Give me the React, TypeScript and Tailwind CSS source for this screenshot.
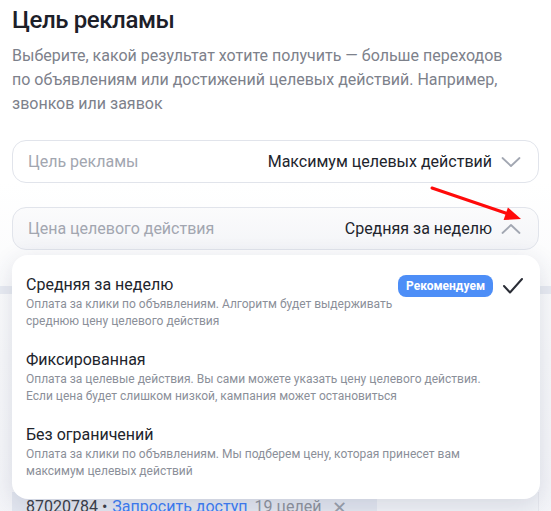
import React from "react";

const font = { fontFamily: "Roboto, 'Noto Sans', Arial, sans-serif" };

function ChevronDown() {
  return (
    <svg width="20" height="12" viewBox="0 0 20 12" fill="none">
      <path d="M1.5 2 L10 10 L18.5 2" stroke="#a2a7b2" strokeWidth="1.8" strokeLinecap="round" strokeLinejoin="round" />
    </svg>
  );
}
function ChevronUp() {
  return (
    <svg width="20" height="12" viewBox="0 0 20 12" fill="none">
      <path d="M1.5 10 L10 2 L18.5 10" stroke="#a2a7b2" strokeWidth="1.8" strokeLinecap="round" strokeLinejoin="round" />
    </svg>
  );
}
function Check() {
  return (
    <svg width="22" height="18" viewBox="0 0 22 18" fill="none">
      <path d="M2 9 L8 15.5 L20 2" stroke="#2a2d36" strokeWidth="2" strokeLinecap="round" strokeLinejoin="round" />
    </svg>
  );
}

const items = [
  {
    title: "Средняя за неделю",
    desc: ["Оплата за клики по объявлениям. Алгоритм будет выдерживать", "среднюю цену целевого действия"],
    selected: true,
  },
  {
    title: "Фиксированная",
    desc: ["Оплата за целевые действия. Вы сами можете указать цену целевого действия.", "Если цена будет слишком низкой, кампания может остановиться"],
  },
  {
    title: "Без ограничений",
    desc: ["Оплата за клики по объявлениям. Мы подберем цену, которая принесет вам", "максимум целевых действий"],
  },
];

export default function App() {
  return (
    <div className="relative w-[551px] h-[511px] overflow-hidden bg-white" style={font}>
      <div className="px-3">
        <h1 className="pt-[3px] text-[24px] leading-[34px] font-medium text-[#1d2029] tracking-[-0.4px]">Цель рекламы</h1>
        <p className="mt-[7px] text-[16px] leading-[24px] text-[#7d818b]">
          Выберите, какой результат хотите получить — больше переходов
          <br />
          по объявлениям или достижений целевых действий. Например,
          <br />
          звонков или заявок
        </p>
        <div className="mt-[24px] h-[43px] rounded-[14px] border border-[#e1e4eb] bg-white flex items-center pl-[15px] pr-[17px]">
          <span className="text-[16px] text-[#a2a6b0]">Цель рекламы</span>
          <span className="ml-auto text-[16px] text-[#21242c]">Максимум целевых действий</span>
          <span className="ml-[9px] flex"><ChevronDown /></span>
        </div>
      </div>
      <div className="bg-gradient-to-b from-white via-[#f7f8fa] to-[#f3f4f8]">
        <div className="px-3 pt-[24px]">
          <div className="h-[43px] rounded-[14px] border border-[#e1e4eb] bg-gradient-to-b from-[#fbfbfc] to-[#f4f5f8] flex items-center pl-[15px] pr-[17px]">
            <span className="text-[16px] text-[#a2a6b0]">Цена целевого действия</span>
            <span className="ml-auto text-[16px] text-[#21242c]">Средняя за неделю</span>
            <span className="ml-[9px] flex"><ChevronUp /></span>
          </div>
        </div>
        <div className="mt-[36px] h-[8px] bg-[#e8ebf2]" />
        <div className="h-[198px]" />
        <div className="mx-3 border-r border-[#e6e8ee] h-[40px] bg-[#f1f3f7]">
          <div className="inline-flex items-center h-[30px] bg-[#e3e7f0] pl-[14px] pr-[30px] text-[16px] gap-[5px]">
            <span className="text-[#3b3e47]">87020784 •</span>
            <span className="text-[#3d7ef6]">Запросить доступ</span>
            <span className="text-[#8f939d] ml-[2px]">19 целей</span>
            <span className="text-[#9aa0ab] ml-[6px] text-[18px]">✕</span>
          </div>
        </div>
      </div>

      {/* Dropdown menu */}
      <div className="absolute left-[12px] top-[255px] w-[528px] h-[244px] rounded-[16px] bg-white shadow-[0_6px_24px_rgba(40,50,90,0.14)] pt-[19px] pl-[14px] pr-[16px] flex flex-col gap-[19px]">
        {items.map((it) => (
          <div key={it.title} className="relative">
            <div className="text-[16px] leading-[22px] text-[#21242c]">{it.title}</div>
            <div className="text-[12px] leading-[17px] text-[#8b8f99]">
              {it.desc[0]}
              <br />
              {it.desc[1]}
            </div>
            {it.selected && (
              <div className="absolute right-0 top-[1px] flex items-center gap-[9px]">
                <span className="h-[22px] px-[8px] rounded-[8px] bg-[#4d8ef7] text-white text-[12px] font-bold flex items-center">Рекомендуем</span>
                <Check />
              </div>
            )}
          </div>
        ))}
      </div>

      {/* Red arrow annotation */}
      <svg className="absolute left-0 top-0 pointer-events-none" width="551" height="511" viewBox="0 0 551 511">
        <line x1="432" y1="188" x2="507" y2="213.5" stroke="#ff0a0a" strokeWidth="3" strokeLinecap="round" />
        <polygon points="521,219 507.9,207.5 503.6,220" fill="#ff0a0a" />
      </svg>
    </div>
  );
}
